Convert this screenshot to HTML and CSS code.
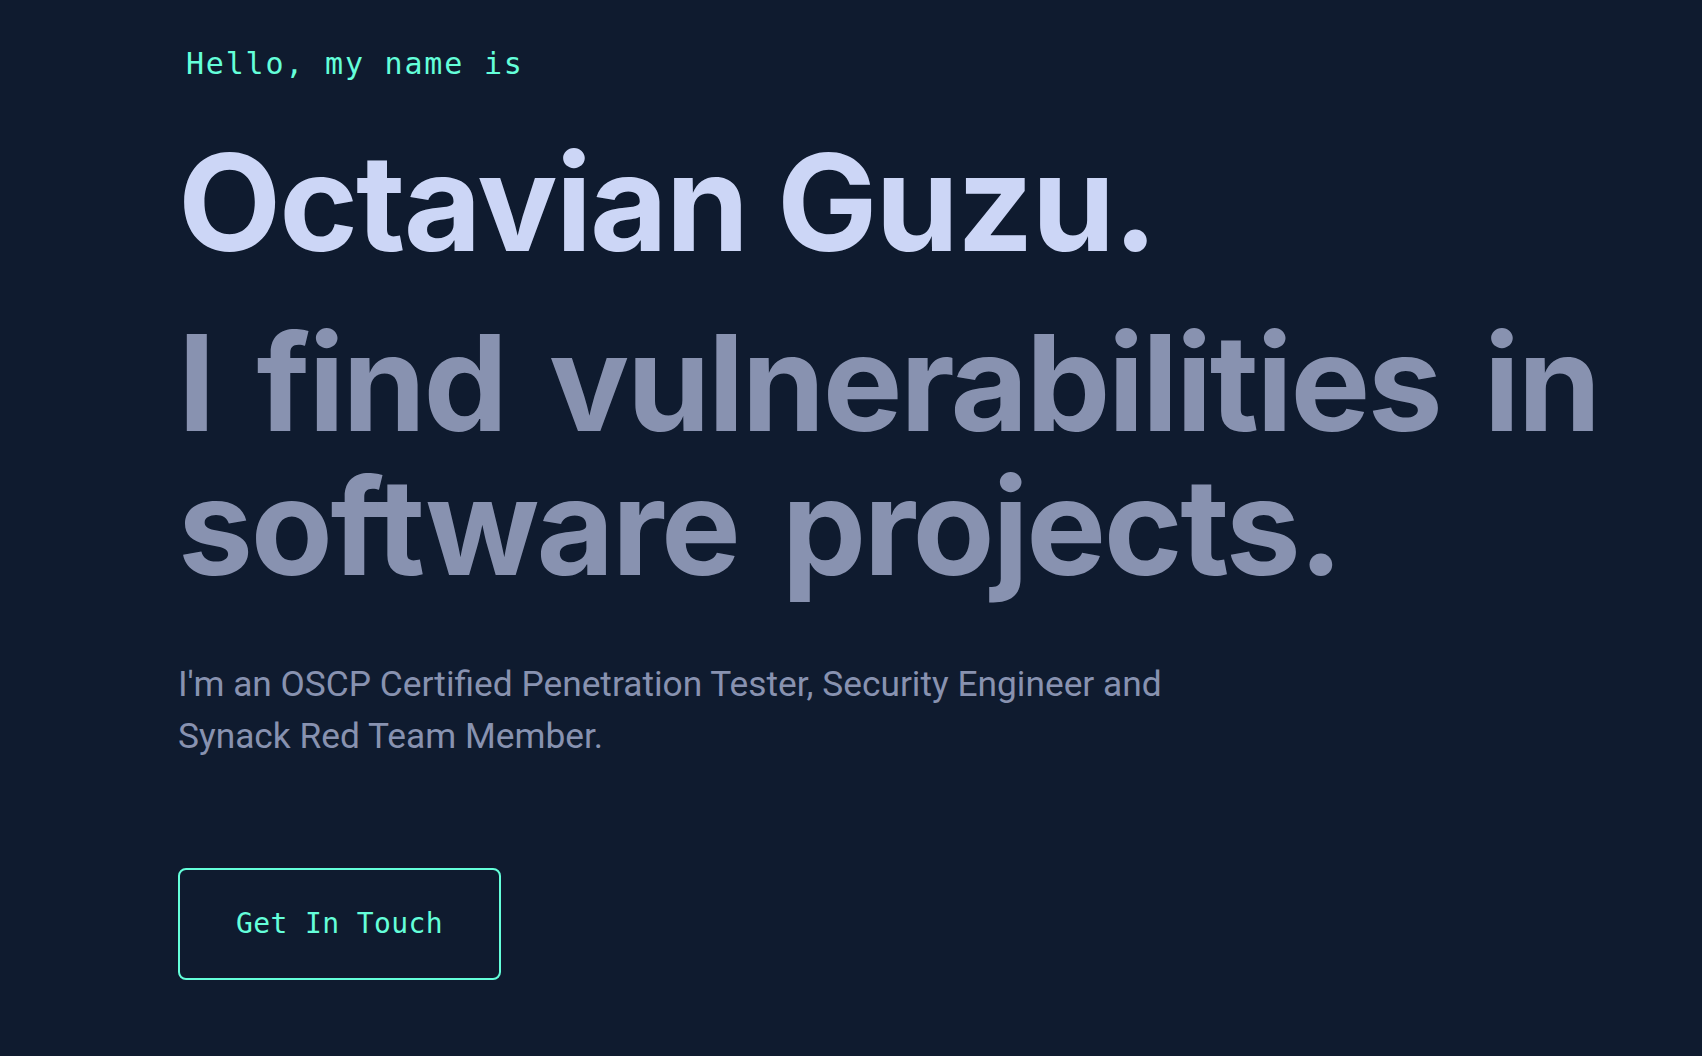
FILE: index.html
```html
<!DOCTYPE html>
<html lang="en">
<head>
<meta charset="utf-8">
<title>Octavian Guzu</title>
<link rel="stylesheet" href="styles.css">
</head>
<body>
<main class="hero">
  <h1 class="hello">Hello, my name is</h1>
  <h2 class="big-heading name">Octavian Guzu.</h2>
  <h3 class="big-heading tagline">I find vulnerabilities in software projects.</h3>
  <p class="intro">I'm an OSCP Certified Penetration Tester, Security Engineer and Synack Red Team Member.</p>
  <a class="cta" href="#">Get In Touch</a>
</main>
</body>
</html>
```
FILE: styles.css
```css
html, body {
  margin: 0;
  padding: 0;
  background: #0f1b2f;
}
body {
  min-height: 1056px;
}
.hero {
  display: flex;
  flex-direction: column;
  align-items: flex-start;
  padding: 46px 60px 0 178px;
}
.hello {
  margin: 0 0 0 8px;
  font-family: "DejaVu Sans Mono", monospace;
  font-weight: 400;
  font-size: 30px;
  line-height: 36px;
  letter-spacing: 1.8px;
  color: #64ffda;
}
.big-heading {
  margin: 0;
  font-family: Inter, sans-serif;
  font-weight: 700;
  font-size: 134px;
}
.name {
  margin-top: 45px;
  line-height: 150px;
  letter-spacing: -2px;
  color: #ccd6f6;
}
.tagline {
  margin-top: 33px;
  line-height: 144px;
  letter-spacing: -2.4px;
  word-spacing: 14px;
  color: #8892b0;
}
.intro {
  margin: 60px 0 0;
  max-width: 1040px;
  font-family: Roboto, sans-serif;
  font-size: 35.3px;
  line-height: 52px;
  color: #8892b0;
}
.cta {
  margin-top: 106px;
  padding: 40px 56px;
  border: 2px solid #64ffda;
  border-radius: 8px;
  font-family: "DejaVu Sans Mono", monospace;
  font-size: 28px;
  line-height: 28px;
  letter-spacing: 0.4px;
  color: #64ffda;
  text-decoration: none;
}
```
